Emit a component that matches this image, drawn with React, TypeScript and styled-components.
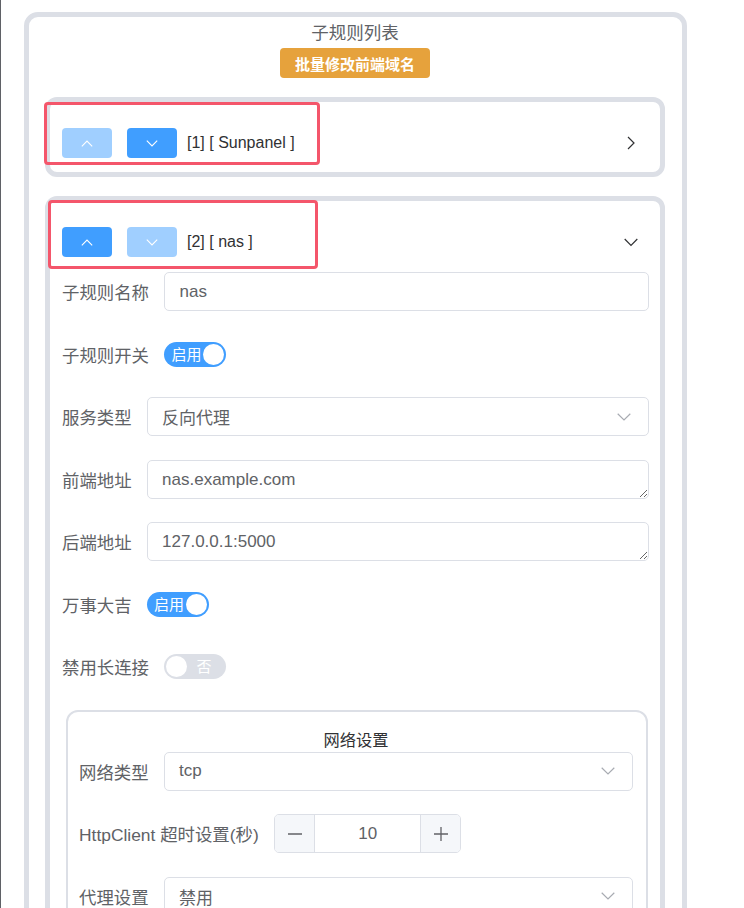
import React from "react";
import styled, { createGlobalStyle } from "styled-components";

const GlobalStyle = createGlobalStyle`
  html, body { margin: 0; padding: 0; background: #ffffff; }
  body {
    font-family: "Liberation Sans", "Noto Sans CJK SC", sans-serif;
    color: #606266;
    overflow: hidden;
  }
  * { box-sizing: border-box; }
`;

const Page = styled.div`
  min-height: 908px;
  border-left: 1px solid #5f6166;
  padding: 12px 0 0 23px;
`;

const OuterCard = styled.div`
  width: 663px;
  border: 5px solid #dcdfe6;
  border-radius: 14px;
  padding: 3px 17px 40px 16px;
  display: flex;
  flex-direction: column;
`;

const Title = styled.div`
  text-align: center;
  font-size: 17.5px;
  line-height: 26px;
  color: #606266;
`;

const BatchBar = styled.div`
  display: flex;
  justify-content: center;
  margin-top: 2px;
`;

const WarnButton = styled.button`
  height: 30px;
  padding: 0 15px;
  border: none;
  border-radius: 4px;
  background: #e6a23c;
  color: #ffffff;
  font-family: inherit;
  font-size: 15px;
  font-weight: bold;
`;

const CardList = styled.div`
  margin-top: 19px;
  display: flex;
  flex-direction: column;
  gap: 19px;
`;

const RuleCard = styled.div`
  position: relative;
  border: 5px solid #dcdfe6;
  border-radius: 12px;
`;

const Highlight = styled.div<{ $l: number; $t: number; $w: number; $h: number }>`
  position: absolute;
  left: ${(p) => p.$l}px;
  top: ${(p) => p.$t}px;
  width: ${(p) => p.$w}px;
  height: ${(p) => p.$h}px;
  border: 3px solid #f4566b;
  border-radius: 4px;
  pointer-events: none;
`;

const CardHeader = styled.div`
  display: flex;
  align-items: center;
  padding: 26px 22px 14px 12px;
`;

const MoveButton = styled.button<{ $light: boolean }>`
  width: 50px;
  height: 30px;
  border: none;
  border-radius: 4px;
  background: ${(p) => (p.$light ? "#a0cfff" : "#409eff")};
  display: flex;
  align-items: center;
  justify-content: center;
  padding: 0;
  & + & {
    margin-left: 15px;
  }
`;

const HeaderText = styled.span`
  margin-left: 10px;
  font-size: 16px;
  color: #303133;
`;

const HeaderArrow = styled.span`
  margin-left: auto;
  display: flex;
  align-items: center;
`;

const CardBody = styled.div`
  padding: 1px 11px 0 12px;
  display: flex;
  flex-direction: column;
  gap: 23.5px;
`;

const FormRow = styled.div`
  display: flex;
  align-items: center;
  min-height: 39px;
`;

const Label = styled.span`
  flex: none;
  font-size: 17.4px;
  color: #606266;
  padding-right: 15.5px;
  white-space: nowrap;
`;

const TextInput = styled.input`
  flex: 1;
  min-width: 0;
  height: 39px;
  border: 1px solid #dcdfe6;
  border-radius: 5px;
  padding: 0 14px;
  font-family: inherit;
  font-size: 17px;
  color: #606266;
  outline: none;
`;

const TextArea = styled.textarea`
  flex: 1;
  min-width: 0;
  height: 39px;
  border: 1px solid #dcdfe6;
  border-radius: 5px;
  padding: 6px 14px;
  line-height: 25px;
  font-family: inherit;
  font-size: 17px;
  color: #606266;
  outline: none;
  resize: vertical;
  overflow: hidden;
`;

const SelectBox = styled.div`
  flex: 1;
  min-width: 0;
  height: 39px;
  border: 1px solid #dcdfe6;
  border-radius: 5px;
  padding: 0 17px 0 14px;
  display: flex;
  align-items: center;
  justify-content: space-between;
  font-size: 17px;
  color: #606266;
`;

const Switch = styled.span<{ $on: boolean }>`
  display: inline-flex;
  align-items: center;
  flex-direction: ${(p) => (p.$on ? "row" : "row-reverse")};
  width: 62px;
  height: 25px;
  border-radius: 13px;
  background: ${(p) => (p.$on ? "#409eff" : "#dcdfe6")};
  padding: ${(p) => (p.$on ? "0 2px 0 7px" : "0 15px 0 2px")};
`;

const SwitchText = styled.span`
  font-size: 15px;
  line-height: 1;
  color: #ffffff;
`;

const Knob = styled.span<{ $on: boolean }>`
  width: 21px;
  height: 21px;
  border-radius: 50%;
  background: #ffffff;
  ${(p) => (p.$on ? "margin-left: auto;" : "margin-right: auto;")}
`;

const SubCard = styled.div`
  margin: 0 1px 0 4px;
  border: 2px solid #dcdfe6;
  border-radius: 12px;
  padding: 16px 13px 30px 11px;
  display: flex;
  flex-direction: column;
`;

const SubTitle = styled.div`
  text-align: center;
  font-size: 16.25px;
  line-height: 24px;
  color: #303133;
`;

const SubRows = styled.div`
  display: flex;
  flex-direction: column;
  gap: 23.5px;
`;

const NumberBox = styled.div`
  display: flex;
  width: 187px;
  height: 39px;
  border: 1px solid #dcdfe6;
  border-radius: 5px;
  overflow: hidden;
`;

const NumberButton = styled.span<{ $side: "left" | "right" }>`
  width: 40px;
  flex: none;
  background: #f5f7fa;
  display: flex;
  align-items: center;
  justify-content: center;
  ${(p) =>
    p.$side === "left"
      ? "border-right: 1px solid #dcdfe6;"
      : "border-left: 1px solid #dcdfe6;"}
`;

const NumberValue = styled.span`
  flex: 1;
  display: flex;
  align-items: center;
  justify-content: center;
  font-size: 17px;
  color: #606266;
`;

const ChevronUp = () => (
  <svg width="12" height="7" viewBox="0 0 12 7">
    <polyline points="0.8,6.3 6,1 11.2,6.3" fill="none" stroke="#fff" strokeWidth="1.1" />
  </svg>
);
const ChevronDownWhite = () => (
  <svg width="12" height="7" viewBox="0 0 12 7">
    <polyline points="0.8,0.7 6,6 11.2,0.7" fill="none" stroke="#fff" strokeWidth="1.1" />
  </svg>
);
const ArrowRight = () => (
  <svg width="14" height="14" viewBox="0 0 14 14">
    <polyline points="4,1 10,7 4,13" fill="none" stroke="#303133" strokeWidth="1.2" />
  </svg>
);
const ArrowDown = () => (
  <svg width="14" height="14" viewBox="0 0 14 14">
    <polyline points="0.7,4 7,10.3 13.3,4" fill="none" stroke="#303133" strokeWidth="1.2" />
  </svg>
);
const SelectArrow = () => (
  <svg width="14" height="8" viewBox="0 0 14 8">
    <polyline points="0.7,0.8 7,7 13.3,0.8" fill="none" stroke="#a8abb2" strokeWidth="1.2" />
  </svg>
);
const Minus = () => (
  <svg width="16" height="16" viewBox="0 0 16 16">
    <line x1="1" y1="8" x2="15" y2="8" stroke="#606266" strokeWidth="1.3" />
  </svg>
);
const Plus = () => (
  <svg width="16" height="16" viewBox="0 0 16 16">
    <line x1="1" y1="8" x2="15" y2="8" stroke="#606266" strokeWidth="1.3" />
    <line x1="8" y1="1" x2="8" y2="15" stroke="#606266" strokeWidth="1.3" />
  </svg>
);

const Toggle = ({ on, text }: { on: boolean; text: string }) => (
  <Switch $on={on}>
    <SwitchText>{text}</SwitchText>
    <Knob $on={on} />
  </Switch>
);

export default function App() {
  return (
    <>
      <GlobalStyle />
      <Page>
        <OuterCard>
          <Title>子规则列表</Title>
          <BatchBar>
            <WarnButton>批量修改前端域名</WarnButton>
          </BatchBar>
          <CardList>
            <RuleCard>
              <Highlight $l={-6} $t={0} $w={276} $h={63} />
              <CardHeader>
                <MoveButton $light={true}>
                  <ChevronUp />
                </MoveButton>
                <MoveButton $light={false}>
                  <ChevronDownWhite />
                </MoveButton>
                <HeaderText>[1] [ Sunpanel ]</HeaderText>
                <HeaderArrow>
                  <ArrowRight />
                </HeaderArrow>
              </CardHeader>
            </RuleCard>

            <RuleCard>
              <Highlight $l={-2} $t={-1} $w={270} $h={69} />
              <CardHeader>
                <MoveButton $light={false}>
                  <ChevronUp />
                </MoveButton>
                <MoveButton $light={true}>
                  <ChevronDownWhite />
                </MoveButton>
                <HeaderText>[2] [ nas ]</HeaderText>
                <HeaderArrow>
                  <ArrowDown />
                </HeaderArrow>
              </CardHeader>
              <CardBody>
                <FormRow>
                  <Label>子规则名称</Label>
                  <TextInput readOnly value="nas" />
                </FormRow>
                <FormRow>
                  <Label>子规则开关</Label>
                  <Toggle on={true} text="启用" />
                </FormRow>
                <FormRow>
                  <Label>服务类型</Label>
                  <SelectBox>
                    <span>反向代理</span>
                    <SelectArrow />
                  </SelectBox>
                </FormRow>
                <FormRow>
                  <Label>前端地址</Label>
                  <TextArea readOnly value="nas.example.com" />
                </FormRow>
                <FormRow>
                  <Label>后端地址</Label>
                  <TextArea readOnly value="127.0.0.1:5000" />
                </FormRow>
                <FormRow>
                  <Label>万事大吉</Label>
                  <Toggle on={true} text="启用" />
                </FormRow>
                <FormRow>
                  <Label>禁用长连接</Label>
                  <Toggle on={false} text="否" />
                </FormRow>
                <SubCard>
                  <SubTitle>网络设置</SubTitle>
                  <SubRows>
                    <FormRow>
                      <Label>网络类型</Label>
                      <SelectBox>
                        <span>tcp</span>
                        <SelectArrow />
                      </SelectBox>
                    </FormRow>
                    <FormRow>
                      <Label>HttpClient 超时设置(秒)</Label>
                      <NumberBox>
                        <NumberButton $side="left">
                          <Minus />
                        </NumberButton>
                        <NumberValue>10</NumberValue>
                        <NumberButton $side="right">
                          <Plus />
                        </NumberButton>
                      </NumberBox>
                    </FormRow>
                    <FormRow>
                      <Label>代理设置</Label>
                      <SelectBox>
                        <span>禁用</span>
                        <SelectArrow />
                      </SelectBox>
                    </FormRow>
                  </SubRows>
                </SubCard>
              </CardBody>
            </RuleCard>
          </CardList>
        </OuterCard>
      </Page>
    </>
  );
}
